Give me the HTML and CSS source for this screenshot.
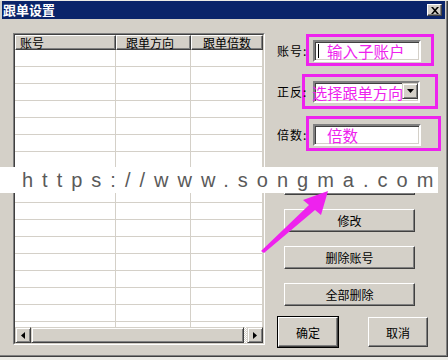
FILE: index.html
```html
<!DOCTYPE html>
<html lang="zh">
<head>
    <meta charset="UTF-8">
    <meta name="viewport" content="width=device-width, initial-scale=1.0">
    <title>跟单设置</title>
    <link rel="stylesheet" href="styles.css">
</head>
<body>
    <div class="window">
        <div class="titlebar">
            <span class="title">跟单设置</span>
            <span class="close-btn">
                <svg width="8" height="7" viewBox="0 0 8 7"><path d="M0 0h2l2 2.2L6 0h2L5 3.5 8 7H6L4 4.8 2 7H0l3-3.5z" fill="#000"/></svg>
            </span>
        </div>

        <div class="client">
            <div class="list">
                <div class="list-inner">
                    <div class="list-head">
                        <div class="hcell c1">账号</div>
                        <div class="hcell c2">跟单方向</div>
                        <div class="hcell c3">跟单倍数</div>
                    </div>
                    <div class="list-body">
                        <div class="row"><div class="cell c1"></div><div class="cell c2"></div><div class="cell c3"></div></div>
                        <div class="row"><div class="cell c1"></div><div class="cell c2"></div><div class="cell c3"></div></div>
                        <div class="row"><div class="cell c1"></div><div class="cell c2"></div><div class="cell c3"></div></div>
                        <div class="row"><div class="cell c1"></div><div class="cell c2"></div><div class="cell c3"></div></div>
                        <div class="row"><div class="cell c1"></div><div class="cell c2"></div><div class="cell c3"></div></div>
                        <div class="row"><div class="cell c1"></div><div class="cell c2"></div><div class="cell c3"></div></div>
                        <div class="row"><div class="cell c1"></div><div class="cell c2"></div><div class="cell c3"></div></div>
                        <div class="row"><div class="cell c1"></div><div class="cell c2"></div><div class="cell c3"></div></div>
                        <div class="row"><div class="cell c1"></div><div class="cell c2"></div><div class="cell c3"></div></div>
                        <div class="row"><div class="cell c1"></div><div class="cell c2"></div><div class="cell c3"></div></div>
                        <div class="row"><div class="cell c1"></div><div class="cell c2"></div><div class="cell c3"></div></div>
                        <div class="row"><div class="cell c1"></div><div class="cell c2"></div><div class="cell c3"></div></div>
                        <div class="row"><div class="cell c1"></div><div class="cell c2"></div><div class="cell c3"></div></div>
                        <div class="row"><div class="cell c1"></div><div class="cell c2"></div><div class="cell c3"></div></div>
                        <div class="row"><div class="cell c1"></div><div class="cell c2"></div><div class="cell c3"></div></div>
                        <div class="row"><div class="cell c1"></div><div class="cell c2"></div><div class="cell c3"></div></div>
                        <div class="row"><div class="cell c1"></div><div class="cell c2"></div><div class="cell c3"></div></div>
                    </div>
                    <div class="hscroll">
                        <div class="sbtn">
                            <svg width="4" height="7" viewBox="0 0 4 7"><path d="M4 0v7L0 3.5z" fill="#000"/></svg>
                        </div>
                        <div class="thumb"></div>
                        <div class="track"></div>
                        <div class="sbtn">
                            <svg width="4" height="7" viewBox="0 0 4 7"><path d="M0 0v7l4-3.5z" fill="#000"/></svg>
                        </div>
                    </div>
                </div>
            </div>

            <div class="side">
                <div class="field first">
                    <span class="label">账号:</span>
                    <div class="edit"><span class="caret"></span><span class="hint">输入子账户</span></div>
                </div>
                <div class="field second">
                    <span class="label">正反:</span>
                    <div class="edit combo">
                        <span class="hint combo-hint">选择跟单方向</span>
                        <span class="drop">
                            <svg width="7" height="4" viewBox="0 0 7 4"><path d="M0 0h7L3.5 4z" fill="#000"/></svg>
                        </span>
                    </div>
                </div>
                <div class="field third">
                    <span class="label">倍数:</span>
                    <div class="edit"><span class="hint times-hint">倍数</span></div>
                </div>

                <div class="actions">
                    <button class="btn">添加</button>
                    <button class="btn">修改</button>
                    <button class="btn">删除账号</button>
                    <button class="btn">全部删除</button>
                </div>

                <div class="dialog-btns">
                    <button class="btn big default">确定</button>
                    <button class="btn big">取消</button>
                </div>
            </div>
        </div>
    </div>

    <!-- annotations drawn over the screenshot -->
    <div class="mark mark-1"></div>
    <div class="mark mark-2"></div>
    <div class="mark mark-3"></div>

    <div class="watermark">https://www.songma.com</div>

    <svg class="arrow" width="448" height="360" viewBox="0 0 448 360">
        <polygon points="261,251 309,205 303,200 328,191 321,215 315,210 264,253" fill="#ee22ee"/>
    </svg>
</body>
</html>
```

FILE: styles.css
```css
body {
    margin: 0;
    width: 448px;
    height: 360px;
    position: relative;
    overflow: hidden;
    background-color: #ecebe6;
    font-family: "Noto Sans CJK SC", sans-serif;
    font-size: 12px;
    color: #000;
}

.window {
    height: 355px;
    background-color: #d4d0c8;
    border-bottom: 1px solid #404040;
    border-right: 1px solid #404040;
    box-shadow: inset -1px -1px #808080;
}

.titlebar {
    margin: 1px 2px 0 2px;
    height: 18px;
    background-color: #0a246a;
    display: flex;
    align-items: center;
    justify-content: space-between;
}

.title {
    color: #fff;
    font-weight: bold;
    font-size: 13px;
    line-height: 18px;
    padding-left: 1px;
}

.close-btn {
    width: 15px;
    height: 12px;
    margin-right: 3px;
    box-sizing: border-box;
    background-color: #d4d0c8;
    border: 1px solid;
    border-color: #fff #404040 #404040 #fff;
    box-shadow: inset -1px -1px #808080;
    display: flex;
    align-items: center;
    justify-content: center;
}

.client {
    display: flex;
    padding: 14px 0 0 13px;
}

/* list view */
.list {
    border: 1px solid;
    border-color: #808080 #fff #fff #808080;
    align-self: flex-start;
}

.list-inner {
    width: 248px;
    border: 1px solid;
    border-color: #404040 #d4d0c8 #d4d0c8 #404040;
    background-color: #fff;
}

.list-head {
    display: flex;
    height: 15px;
}

.hcell {
    box-sizing: border-box;
    background-color: #d4d0c8;
    border: 1px solid;
    border-color: #fff #404040 #404040 #fff;
    box-shadow: inset -1px -1px #808080;
    line-height: 13px;
    font-size: 12px;
    white-space: nowrap;
}

.c1 { width: 101px; }
.c2 { width: 75px; }
.c3 { width: 72px; }

.hcell.c1 { padding-left: 4px; }
.hcell.c2 { padding-left: 9px; }
.hcell.c3 { padding-left: 11px; }

.list-body {
    height: 277px;
    overflow: hidden;
}

.row {
    display: flex;
    height: 17px;
    box-sizing: border-box;
    border-bottom: 1px solid #d4d0c8;
}

.cell {
    box-sizing: border-box;
    border-right: 1px solid #d4d0c8;
}

.hscroll {
    display: flex;
    height: 16px;
    background-color: #d4d0c8;
}

.sbtn,
.thumb {
    box-sizing: border-box;
    height: 16px;
    border: 1px solid;
    border-color: #d4d0c8 #404040 #404040 #d4d0c8;
    box-shadow: inset 1px 1px #fff, inset -1px -1px #808080;
    background-color: #d4d0c8;
}

.sbtn {
    width: 16px;
    display: flex;
    align-items: center;
    justify-content: center;
}

.thumb {
    flex: 1;
}

.track {
    width: 3px;
    background: repeating-conic-gradient(#fff 0 25%, #d4d0c8 0 50%) 0 0 / 2px 2px;
}

/* right side */
.side {
    margin-left: 12px;
}

.field {
    display: flex;
    align-items: center;
    height: 22px;
}

.field.first { margin-top: 7px; }
.field.second { margin-top: 19px; }
.field.third { margin-top: 21px; }

.label {
    position: relative;
    z-index: 2;
    width: 36px;
    line-height: 14px;
    letter-spacing: 1px;
}

.edit {
    position: relative;
    width: 108px;
    height: 22px;
    box-sizing: border-box;
    background-color: #fff;
    border: 2px solid;
    border-color: #808080 #fff #fff #808080;
    box-shadow: inset 1px 1px #404040, inset -1px -1px #d4d0c8;
    display: flex;
    align-items: center;
}

.caret {
    width: 1px;
    height: 14px;
    margin-left: 3px;
    background-color: #000;
}

.hint {
    color: #ee22ee;
    font-size: 15.5px;
    line-height: 18px;
    white-space: nowrap;
    margin-left: 8px;
}

.combo {
    width: 107px;
}

.combo-hint {
    margin-left: -3px;
    font-size: 15.2px;
}

.times-hint {
    margin-left: 12px;
}

.drop {
    position: absolute;
    right: 0;
    top: 0;
    width: 16px;
    height: 16px;
    box-sizing: border-box;
    background-color: #d4d0c8;
    border: 1px solid;
    border-color: #d4d0c8 #404040 #404040 #d4d0c8;
    box-shadow: inset 1px 1px #fff, inset -1px -1px #808080;
    display: flex;
    align-items: center;
    justify-content: center;
}

.actions {
    display: flex;
    flex-direction: column;
    gap: 14px;
    margin: 26px 0 0 7px;
}

.btn {
    width: 131px;
    height: 23px;
    box-sizing: border-box;
    padding: 0;
    background-color: #d4d0c8;
    border: 1px solid;
    border-color: #fff #404040 #404040 #fff;
    box-shadow: inset -1px -1px #808080;
    font-family: "Noto Sans CJK SC", sans-serif;
    font-size: 12px;
    color: #000;
}

.dialog-btns {
    display: flex;
    gap: 30px;
    margin: 11px 0 0 1px;
}

.btn.big {
    width: 60px;
    height: 30px;
}

.btn.default {
    outline: 1px solid #000;
}

/* annotations */
.mark {
    position: absolute;
    z-index: 1;
    box-sizing: border-box;
    border: 3px solid #ee22ee;
}

.mark-1 { left: 306px; top: 34px; width: 128px; height: 32px; }
.mark-2 { left: 302px; top: 74px; width: 136px; height: 35px; }
.mark-3 { left: 306px; top: 116px; width: 135px; height: 35px; }

.watermark {
    position: absolute;
    z-index: 3;
    left: 0;
    top: 167px;
    width: 438px;
    height: 26px;
    box-sizing: border-box;
    padding-left: 22px;
    background-color: #fff;
    color: #5a5a5a;
    font-family: "Liberation Sans", sans-serif;
    font-size: 20px;
    line-height: 26px;
    letter-spacing: 9px;
    white-space: nowrap;
}

.arrow {
    position: absolute;
    z-index: 4;
    left: 0;
    top: 0;
}
```
